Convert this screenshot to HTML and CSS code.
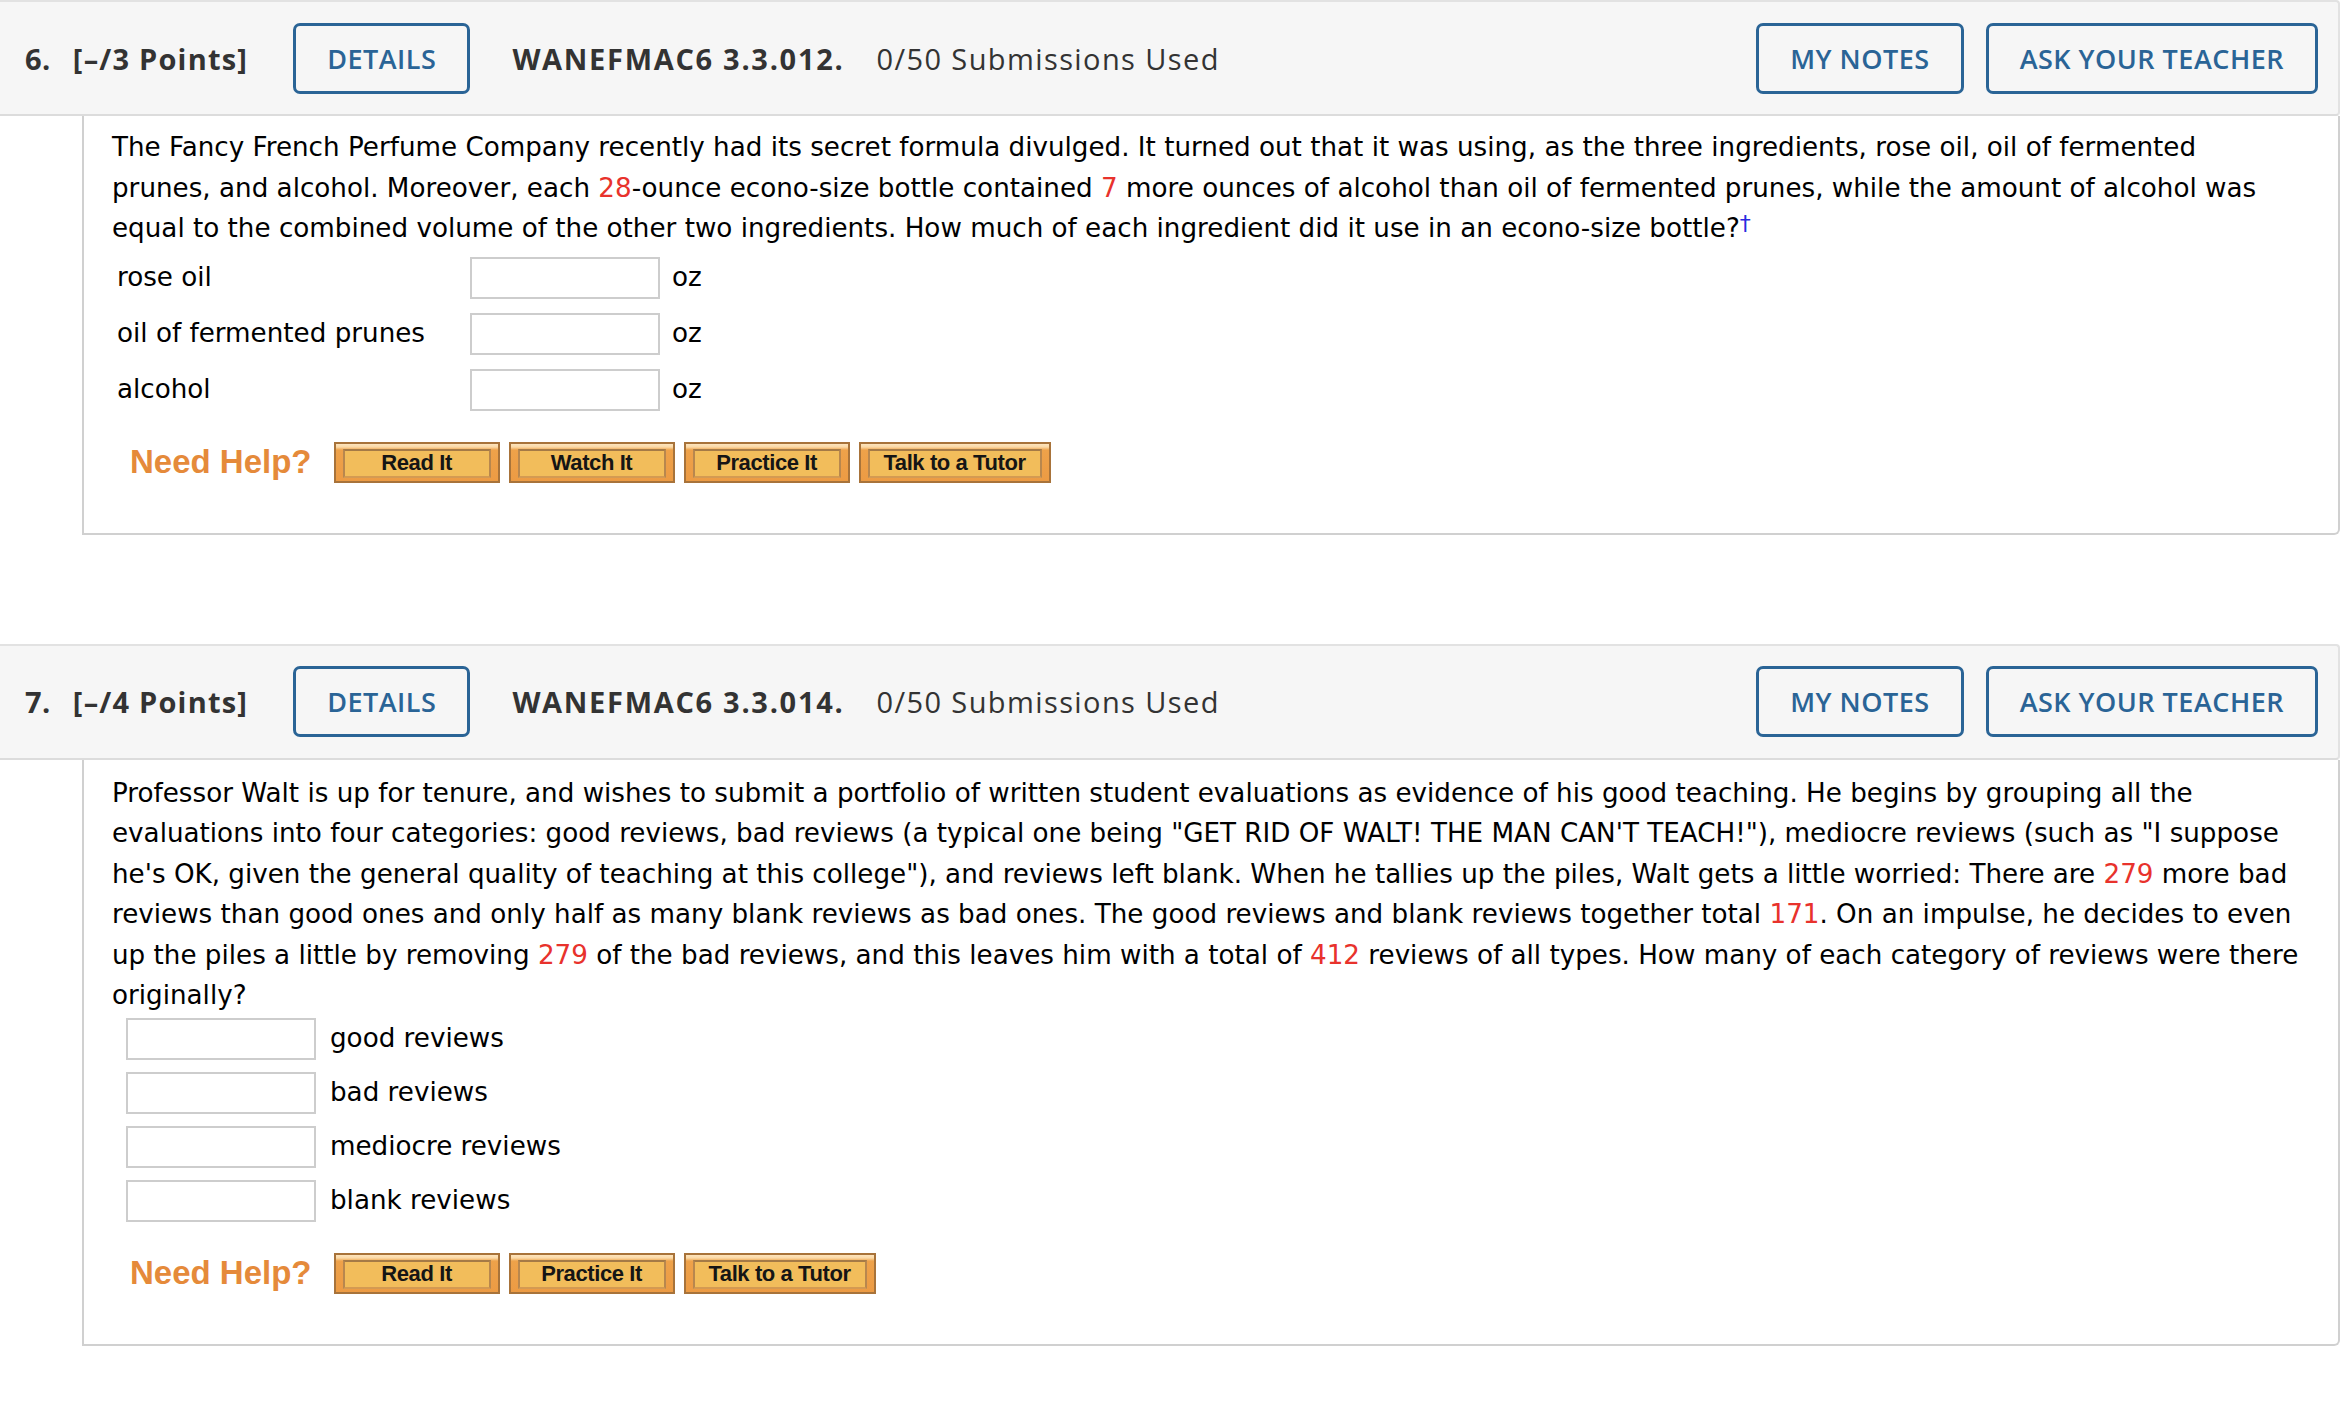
FILE: index.html
```html
<!DOCTYPE html>
<html lang="en">
<head>
<meta charset="utf-8">
<title>WebAssign questions</title>
<link rel="stylesheet" href="styles.css">
</head>
<body>
<section class="question">
  <header class="qhead">
    <span class="qnum">6.</span>
    <span class="qpoints">[–/3 Points]</span>
    <span class="obtn details">DETAILS</span>
    <span class="qcode">WANEFMAC6 3.3.012.</span>
    <span class="qsubs">0/50 Submissions Used</span>
    <span class="spacer"></span>
    <span class="obtn notes">MY NOTES</span>
    <span class="obtn">ASK YOUR TEACHER</span>
  </header>
  <div class="qbody first">
    <p class="qtext narrow">The Fancy French Perfume Company recently had its secret formula divulged. It turned out that it was using, as the three ingredients, rose oil, oil of fermented prunes, and alcohol. Moreover, each <span class="red">28</span>-ounce econo-size bottle contained <span class="red">7</span> more ounces of alcohol than oil of fermented prunes, while the amount of alcohol was equal to the combined volume of the other two ingredients. How much of each ingredient did it use in an econo-size bottle?<sup class="dagger">†</sup></p>
    <div class="answers-a">
      <span class="label">rose oil</span><span class="inp"></span><span class="unit">oz</span>
      <span class="label">oil of fermented prunes</span><span class="inp"></span><span class="unit">oz</span>
      <span class="label">alcohol</span><span class="inp"></span><span class="unit">oz</span>
    </div>
    <div class="help">
      <span class="needhelp">Need Help?</span>
      <span class="hbtn"><span>Read It</span></span>
      <span class="hbtn"><span>Watch It</span></span>
      <span class="hbtn"><span>Practice It</span></span>
      <span class="hbtn wide"><span>Talk to a Tutor</span></span>
    </div>
  </div>
</section>

<section class="question">
  <header class="qhead">
    <span class="qnum">7.</span>
    <span class="qpoints">[–/4 Points]</span>
    <span class="obtn details">DETAILS</span>
    <span class="qcode">WANEFMAC6 3.3.014.</span>
    <span class="qsubs">0/50 Submissions Used</span>
    <span class="spacer"></span>
    <span class="obtn notes">MY NOTES</span>
    <span class="obtn">ASK YOUR TEACHER</span>
  </header>
  <div class="qbody">
    <p class="qtext">Professor Walt is up for tenure, and wishes to submit a portfolio of written student evaluations as evidence of his good teaching. He begins by grouping all the evaluations into four categories: good reviews, bad reviews (a typical one being "GET RID OF WALT! THE MAN CAN'T TEACH!"), mediocre reviews (such as "I suppose he's OK, given the general quality of teaching at this college"), and reviews left blank. When he tallies up the piles, Walt gets a little worried: There are <span class="red">279</span> more bad reviews than good ones and only half as many blank reviews as bad ones. The good reviews and blank reviews together total <span class="red">171</span>. On an impulse, he decides to even up the piles a little by removing <span class="red">279</span> of the bad reviews, and this leaves him with a total of <span class="red">412</span> reviews of all types. How many of each category of reviews were there originally?</p>
    <div class="answers-b">
      <span class="inp"></span><span class="label">good reviews</span>
      <span class="inp"></span><span class="label">bad reviews</span>
      <span class="inp"></span><span class="label">mediocre reviews</span>
      <span class="inp"></span><span class="label">blank reviews</span>
    </div>
    <div class="help">
      <span class="needhelp">Need Help?</span>
      <span class="hbtn"><span>Read It</span></span>
      <span class="hbtn"><span>Practice It</span></span>
      <span class="hbtn wide"><span>Talk to a Tutor</span></span>
    </div>
  </div>
</section>
</body>
</html>
```

FILE: styles.css
```css
body {
  margin: 0;
  background: #ffffff;
}

.question + .question {
  margin-top: 109px;
}

.qhead {
  display: flex;
  align-items: center;
  height: 112px;
  margin-right: 12px;
  padding: 0 20px 0 25px;
  background: #f6f6f6;
  border-top: 2px solid #e2e2e2;
  border-bottom: 2px solid #dcdcdc;
  border-right: 2px solid #e2e2e2;
  border-radius: 0 4px 4px 0;
  font-family: "Open Sans", "Liberation Sans", sans-serif;
  font-size: 29px;
  color: #333333;
  white-space: nowrap;
}

.qnum {
  font-weight: 700;
  letter-spacing: 0.5px;
}

.qpoints {
  font-weight: 700;
  margin-left: 22px;
  letter-spacing: 1.2px;
}

.obtn {
  display: inline-flex;
  align-items: center;
  height: 65px;
  padding: 0 31px;
  border: 3px solid #2a6496;
  border-radius: 7px;
  color: #2a6496;
  font-weight: 600;
  font-size: 27px;
  letter-spacing: 0.5px;
}

.details {
  margin-left: 45px;
}

.qcode {
  font-weight: 700;
  margin-left: 42px;
  letter-spacing: 1.7px;
}

.qsubs {
  margin-left: 32px;
  letter-spacing: 1.4px;
}

.spacer {
  flex: 1;
}

.notes {
  margin-right: 22px;
}

.qbody {
  margin: 0 12px 0 82px;
  padding: 13px 28px 50px;
  border: 2px solid #d0d0d0;
  border-top: none;
  border-radius: 0 0 6px 0;
  font-family: "DejaVu Sans", Verdana, sans-serif;
  font-size: 26.2px;
  line-height: 40.5px;
  color: #000000;
}

.qbody.first {
  padding-top: 11px;
}

.qtext {
  margin: 0;
}

.qtext.narrow {
  padding-right: 14px;
}

.red {
  color: #e8322c;
}

.dagger {
  color: #2a2ae0;
  font-size: 22px;
  line-height: 0;
  vertical-align: 6px;
}

.inp {
  display: block;
  height: 42px;
  box-sizing: border-box;
  border: 2px solid #cdcdcd;
  background: #ffffff;
}

.answers-a {
  display: grid;
  grid-template-columns: 353px 190px auto;
  row-gap: 14px;
  align-items: center;
  margin-top: 8px;
  padding-left: 5px;
}

.answers-a .unit {
  margin-left: 12px;
}

.answers-b {
  display: grid;
  grid-template-columns: 190px auto;
  column-gap: 14px;
  row-gap: 12px;
  align-items: center;
  margin-top: 2px;
  padding-left: 14px;
}

.help {
  display: flex;
  align-items: center;
  gap: 9px;
  margin-top: 31px;
  padding-left: 18px;
}

.needhelp {
  margin-right: 13px;
  font-family: "Liberation Sans", Arial, sans-serif;
  font-weight: 700;
  font-size: 33px;
  color: #e58a3a;
}

.hbtn {
  display: flex;
  width: 166px;
  height: 41px;
  box-sizing: border-box;
  padding: 5px 7px 3px;
  border: 2px solid #a8733a;
  background: linear-gradient(#fde4bd 0, #fbd9a6 3px, #eea24a 6px, #ec9b44);
}

.hbtn.wide {
  width: 192px;
}

.hbtn span {
  flex: 1;
  display: flex;
  align-items: center;
  justify-content: center;
  border: 2px solid #b8874e;
  border-top-color: #a57a46;
  border-bottom-color: #d49a52;
  background: #f2bd5b;
  font-family: "Liberation Sans", Arial, sans-serif;
  font-weight: 700;
  font-size: 22px;
  letter-spacing: -0.4px;
  line-height: 1;
  color: #151515;
  white-space: nowrap;
}
```
